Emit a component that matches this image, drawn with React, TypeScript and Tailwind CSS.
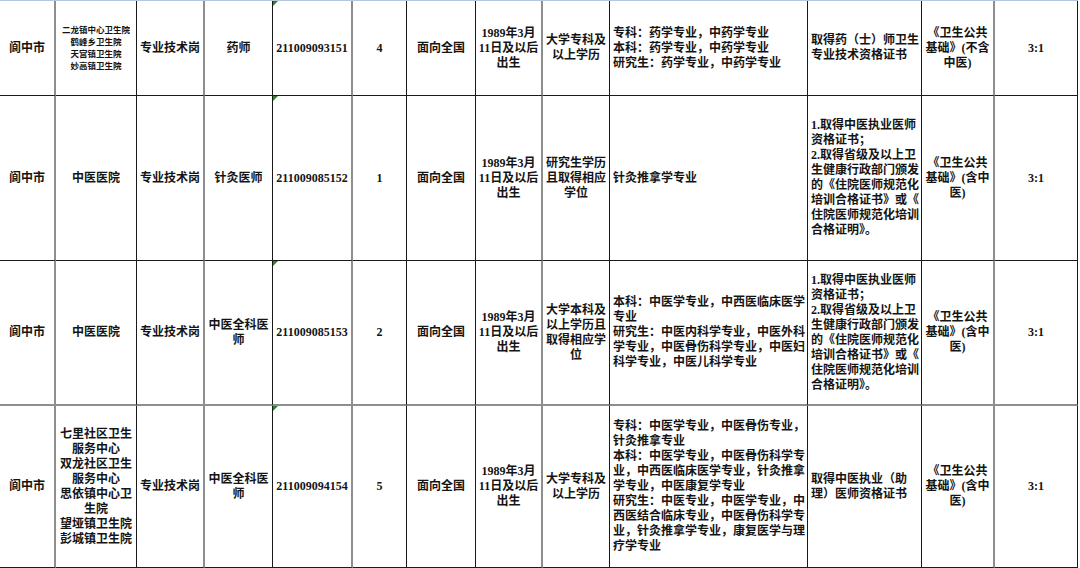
import React from "react";

type Cell = {
  lines: string[];
  left?: boolean;
  small?: boolean;
};

// 列宽（像素），合计 1078
const cols = [56, 81, 68, 68, 80, 54, 69, 67, 67, 198, 114, 73, 83];
// 右边线为灰色粗线的列
const grayCols = [0, 2, 4, 7, 11];

const birth = ["1989年3月", "11日及以后", "出生"];
const exam = ["《卫生公共", "基础》(含中", "医)"];
const doctorCert = [
  "1.取得中医执业医师",
  "资格证书；",
  "2.取得省级及以上卫",
  "生健康行政部门颁发",
  "的《住院医师规范化",
  "培训合格证书》或《",
  "住院医师规范化培训",
  "合格证明》。",
];

const rows: Cell[][] = [
  [
    { lines: ["阆中市"] },
    { lines: ["二龙镇中心卫生院", "鹤峰乡卫生院", "天宫镇卫生院", "妙高镇卫生院"], small: true },
    { lines: ["专业技术岗"] },
    { lines: ["药师"] },
    { lines: ["211009093151"] },
    { lines: ["4"] },
    { lines: ["面向全国"] },
    { lines: birth },
    { lines: ["大学专科及", "以上学历"] },
    {
      lines: ["专科：药学专业，中药学专业", "本科：药学专业，中药学专业", "研究生：药学专业，中药学专业"],
      left: true,
    },
    { lines: ["取得药（士）师卫生", "专业技术资格证书"], left: true },
    { lines: ["《卫生公共", "基础》(不含", "中医)"] },
    { lines: ["3:1"] },
  ],
  [
    { lines: ["阆中市"] },
    { lines: ["中医医院"] },
    { lines: ["专业技术岗"] },
    { lines: ["针灸医师"] },
    { lines: ["211009085152"] },
    { lines: ["1"] },
    { lines: ["面向全国"] },
    { lines: birth },
    { lines: ["研究生学历", "且取得相应", "学位"] },
    { lines: ["针灸推拿学专业"], left: true },
    { lines: doctorCert, left: true },
    { lines: exam },
    { lines: ["3:1"] },
  ],
  [
    { lines: ["阆中市"] },
    { lines: ["中医医院"] },
    { lines: ["专业技术岗"] },
    { lines: ["中医全科医", "师"] },
    { lines: ["211009085153"] },
    { lines: ["2"] },
    { lines: ["面向全国"] },
    { lines: birth },
    { lines: ["大学本科及", "以上学历且", "取得相应学", "位"] },
    {
      lines: [
        "本科：中医学专业，中西医临床医学",
        "专业",
        "研究生：中医内科学专业，中医外科",
        "学专业，中医骨伤科学专业，中医妇",
        "科学专业，中医儿科学专业",
      ],
      left: true,
    },
    { lines: doctorCert, left: true },
    { lines: exam },
    { lines: ["3:1"] },
  ],
  [
    { lines: ["阆中市"] },
    {
      lines: ["七里社区卫生", "服务中心", "双龙社区卫生", "服务中心", "思依镇中心卫", "生院", "望垭镇卫生院", "彭城镇卫生院"],
    },
    { lines: ["专业技术岗"] },
    { lines: ["中医全科医", "师"] },
    { lines: ["211009094154"] },
    { lines: ["5"] },
    { lines: ["面向全国"] },
    { lines: birth },
    { lines: ["大学专科及", "以上学历"] },
    {
      lines: [
        "专科：中医学专业，中医骨伤专业，",
        "针灸推拿专业",
        "本科：中医学专业，中医骨伤科学专",
        "业，中西医临床医学专业，针灸推拿",
        "学专业，中医康复学专业",
        "研究生：中医专业，中医学专业，中",
        "西医结合临床专业，中医骨伤科学专",
        "业，针灸推拿学专业，康复医学与理",
        "疗学专业",
      ],
      left: true,
    },
    { lines: ["取得中医执业（助", "理）医师资格证书"], left: true },
    { lines: exam },
    { lines: ["3:1"] },
  ],
];

function Marker() {
  // Excel“文本格式数字”的绿色角标
  return (
    <svg className="absolute left-0 top-0" width="5" height="5" viewBox="0 0 5 5">
      <polygon points="0,0 5,0 0,5" fill="#1f8a1f" />
    </svg>
  );
}

export default function App() {
  return (
    <div className="h-[568px] w-[1080px] overflow-hidden bg-white font-['Liberation_Serif','Noto_Sans_CJK_SC',serif] font-bold text-[#141414]">
      <div className="grid w-[1078px] grid-cols-[56px_81px_68px_68px_80px_54px_69px_67px_67px_198px_114px_73px_83px] grid-rows-[95px_165px_145px_162px] border-t border-[#b4c7dc]">
        {rows.map((row, r) =>
          row.map((cell, c) => {
            const gray = grayCols.includes(c);
            const grayBottom = r === 2;
            return (
              <div
                key={`${r}-${c}`}
                className={[
                  "relative flex flex-col justify-center overflow-hidden",
                  gray ? "border-r-2 border-r-[#8e8e8e]" : "border-r border-r-[#1a1a1a]",
                  grayBottom ? "border-b-2 border-b-[#8e8e8e]" : "border-b border-b-[#1a1a1a]",
                  cell.left ? "items-start pl-[3px] text-left" : "items-center text-center",
                  cell.small ? "text-[8.5px] leading-[12px]" : "text-[12px] leading-[15px]",
                ].join(" ")}
              >
                {c === 4 && <Marker />}
                {cell.lines.map((l, i) => (
                  <div key={i} className="whitespace-nowrap">
                    {l}
                  </div>
                ))}
              </div>
            );
          })
        )}
      </div>
    </div>
  );
}
